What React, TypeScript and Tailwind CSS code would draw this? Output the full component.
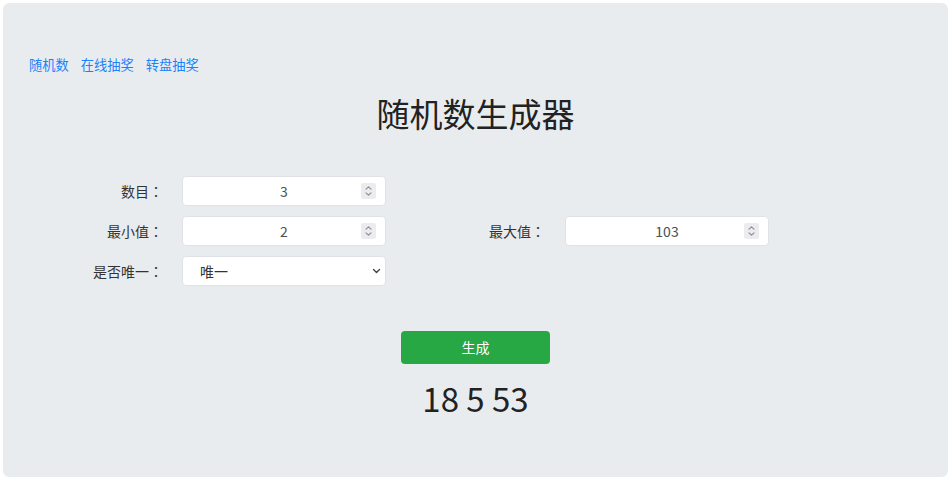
import React from "react";

const font = { fontFamily: '"Noto Sans CJK SC", "Noto Sans", sans-serif' };
const colonFont = { fontFamily: '"Noto Sans CJK JP", "Noto Sans CJK SC", sans-serif' };

function Spinner() {
  return (
    <div className="pointer-events-none absolute right-[10px] top-[7px] flex h-[16px] w-[15px] items-center justify-center rounded-[2px] bg-[#ececef]">
      <svg width="9" height="12" viewBox="0 0 9 12" fill="none" stroke="#8a8a8f" strokeWidth="1.1" strokeLinecap="round" strokeLinejoin="round">
        <path d="M2 4.2 L4.5 1.8 L7 4.2" />
        <path d="M2 7.8 L4.5 10.2 L7 7.8" />
      </svg>
    </div>
  );
}

function NumInput({ value }: { value: string }) {
  return (
    <div className="relative h-[30px] w-[204px]">
      <input
        type="text"
        defaultValue={value}
        className="h-full w-full rounded-[4px] border border-[#dfe3e8] bg-white text-center text-[14px] text-[#495057] outline-none"
        style={font}
      />
      <Spinner />
    </div>
  );
}

function Label({ text, w }: { text: string; w: string }) {
  return (
    <div className={`${w} text-right text-[14px] leading-[30px] text-[#333]`}>
      {text}
      <span style={colonFont}>：</span>
    </div>
  );
}

export default function App() {
  return (
    <div className="min-h-[480px] bg-white p-[3px]" style={font}>
      <div className="flex h-[474px] flex-col rounded-[6px] bg-[#e9ecef] pl-[26px] pt-[52px]">
        <div className="flex gap-[12px] text-[13.25px] leading-[20px] text-[#1a82fb]">
          <a>随机数</a>
          <a>在线抽奖</a>
          <a>转盘抽奖</a>
        </div>
        <h1 className="-ml-[26px] mt-[17px] text-center text-[33px] leading-[42px] text-[#222]">随机数生成器</h1>
        <div className="-ml-[26px] mt-[42px] flex flex-col gap-[10px]">
          <div className="flex items-center">
            <Label text="数目" w="w-[160px]" />
            <div className="ml-[19px]">
              <NumInput value="3" />
            </div>
          </div>
          <div className="flex items-center">
            <Label text="最小值" w="w-[160px]" />
            <div className="ml-[19px]">
              <NumInput value="2" />
            </div>
            <Label text="最大值" w="w-[159px]" />
            <div className="ml-[20px]">
              <NumInput value="103" />
            </div>
          </div>
          <div className="flex items-center">
            <Label text="是否唯一" w="w-[160px]" />
            <div className="relative ml-[19px] h-[30px] w-[204px]">
              <select
                defaultValue="唯一"
                className="h-full w-full appearance-none rounded-[4px] border border-[#dfe3e8] bg-white pl-[17px] text-[14px] text-[#333] outline-none"
                style={font}
              >
                <option>唯一</option>
                <option>不唯一</option>
              </select>
              <svg className="pointer-events-none absolute right-[5px] top-[11px]" width="9" height="8" viewBox="0 0 9 8" fill="none" stroke="#444" strokeWidth="1.4" strokeLinecap="round" strokeLinejoin="round">
                <path d="M1.5 2.5 L4.5 5.5 L7.5 2.5" />
              </svg>
            </div>
          </div>
        </div>
        <div className="-ml-[26px] mt-[45px] flex justify-center">
          <button className="h-[33px] w-[149px] rounded-[4px] bg-[#28a745] text-[14px] text-white" style={font}>
            生成
          </button>
        </div>
        <div className="-ml-[26px] mt-[13px] text-center text-[33px] leading-[42px] text-[#222]">18 5 53</div>
      </div>
    </div>
  );
}
